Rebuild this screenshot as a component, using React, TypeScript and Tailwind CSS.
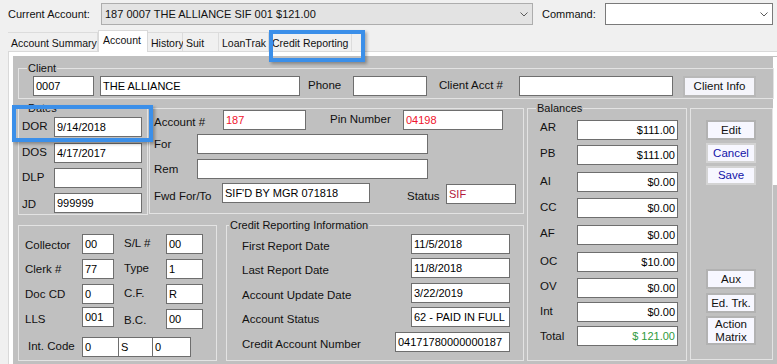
import React from 'react'

type FieldProps = {
  value?: string
  className?: string
  right?: boolean
  color?: string
}

function Field({ value = '', className = '', right = false, color = 'text-black' }: FieldProps) {
  return (
    <div
      className={`h-[20px] shrink-0 bg-white border border-[#6e6e6e] flex items-center px-[2px] text-[11px] leading-none whitespace-nowrap overflow-hidden ${
        right ? 'justify-end' : ''
      } ${color} ${className}`}
    >
      {value}
    </div>
  )
}

function Label({ children, className = '' }: { children: React.ReactNode; className?: string }) {
  return (
    <span className={`shrink-0 text-[11.5px] leading-none text-[#111] whitespace-nowrap ${className}`}>
      {children}
    </span>
  )
}

function Group({
  label,
  legendPos = 'left-[8px]',
  className = '',
  children,
}: {
  label?: string
  legendPos?: string
  className?: string
  children?: React.ReactNode
}) {
  return (
    <div className={`relative shrink-0 border border-[#e3e3e3] ${className}`}>
      {label && (
        <span
          className={`absolute -top-[7px] ${legendPos} bg-[#c0c0c0] px-[1px] text-[11px] leading-[13px] text-[#111] whitespace-nowrap`}
        >
          {label}
        </span>
      )}
      {children}
    </div>
  )
}

function WinBtn({
  children,
  className = '',
  light = false,
}: {
  children: React.ReactNode
  className?: string
  light?: boolean
}) {
  return (
    <div
      className={`w-[50px] shrink-0 flex items-center justify-center text-center bg-[#f7f7ff] border-2 text-[11.5px] leading-[13px] ${
        light ? 'border-[#d4d4d4] text-[#1212a8]' : 'border-[#b2b2b2] text-[#111]'
      } ${className}`}
    >
      {children}
    </div>
  )
}

function Chevron() {
  return (
    <svg width="8" height="5" viewBox="0 0 8 5" className="shrink-0">
      <path d="M0.5 0.5 L4 4 L7.5 0.5" fill="none" stroke="#5a5a5a" strokeWidth="1" />
    </svg>
  )
}

const balances = [
  { l: 'AR', v: '$111.00', mt: 'mt-[11px]', lc: '-translate-y-[2px]', vc: '' },
  { l: 'PB', v: '$111.00', mt: 'mt-[5px]', lc: '-translate-y-[1px]', vc: '' },
  { l: 'AI', v: '$0.00', mt: 'mt-[7px]', lc: '', vc: '' },
  { l: 'CC', v: '$0.00', mt: 'mt-[6px]', lc: '', vc: '' },
  { l: 'AF', v: '$0.00', mt: 'mt-[7px]', lc: '-translate-y-[1px]', vc: '' },
  { l: 'OC', v: '$10.00', mt: 'mt-[7px]', lc: 'text-[#1c1cff]', vc: '' },
  { l: 'OV', v: '$0.00', mt: 'mt-[6px]', lc: '-translate-y-[1px]', vc: '' },
  { l: 'Int', v: '$0.00', mt: 'mt-[4px]', lc: '', vc: '' },
  { l: 'Total', v: '$ 121.00', mt: 'mt-[4px]', lc: 'translate-y-[1px]', vc: 'text-[#2f9a3c]' },
]

const credit = [
  { l: 'First Report Date', v: '11/5/2018', mt: '' },
  { l: 'Last Report Date', v: '11/8/2018', mt: 'mt-[4px]' },
  { l: 'Account Update Date', v: '3/22/2019', mt: 'mt-[5px]' },
  { l: 'Account Status', v: '62 - PAID IN FULL', mt: 'mt-[4px]' },
]

const tabs = [
  { t: 'Account Summary', w: 'w-[90px]' },
  { t: 'Account', w: 'w-[50px]', active: true },
  { t: 'History', w: 'w-[35px]' },
  { t: 'Suit', w: 'w-[36px]' },
  { t: 'LoanTrak', w: 'w-[50px]' },
  { t: 'Credit Reporting', w: 'w-[83px]' },
]

export default function App() {
  return (
    <div className="relative w-[777px] h-[364px] overflow-hidden bg-[#f0f0f0] font-['Liberation_Sans',Arial,sans-serif] text-[#111]">
      {/* Barra superior */}
      <div className="flex items-center h-[22px] mt-[3px] pl-[8px]">
        <span className="w-[93px] text-[11px] whitespace-nowrap">Current Account:</span>
        <div className="w-[432px] h-[22px] bg-[#e3e3e3] border border-[#adadad] flex items-center pl-[3px] pr-[4px] text-[11px]">
          <span className="flex-1 whitespace-nowrap">187 0007 THE ALLIANCE SIF 001 $121.00</span>
          <Chevron />
        </div>
        <span className="ml-[9px] w-[63px] text-[11px]">Command:</span>
        <div className="w-[168px] h-[22px] bg-white border border-[#7a7a7a] flex items-center justify-end pr-[4px]">
          <Chevron />
        </div>
      </div>

      {/* Pestañas */}
      <div className="flex items-end h-[21px] mt-[5px] pl-[8px]">
        {tabs.map((tab) =>
          tab.active ? (
            <div
              key={tab.t}
              className={`${tab.w} relative z-10 h-[22px] -mb-[1px] bg-white border-l border-r border-t border-[#d9d9d9] pl-[4px] pt-[4px] text-[10.5px] leading-none whitespace-nowrap`}
            >
              {tab.t}
            </div>
          ) : (
            <div
              key={tab.t}
              className={`${tab.w} h-[19px] bg-[#f0f0f0] border-r border-t border-[#dcdcdc] pl-[3px] pt-[5px] text-[10.5px] leading-none whitespace-nowrap`}
            >
              {tab.t}
            </div>
          )
        )}
      </div>

      {/* Página */}
      <div className="ml-[8px] h-[313px] border-l border-t border-[#d9d9d9] bg-white pl-[4px] pt-[4px]">
        <div className="relative h-full bg-[#c0c0c0] pl-[5px] pt-[12px]">
          <div className="absolute right-0 top-[1px] w-[4px] h-[128px] bg-white" />

          {/* Client */}
          <Group label="Client" className="w-[756px] h-[31px] flex items-start pt-[7px]">
            <Field value="0007" className="ml-[14px] w-[61px]" />
            <Field value="THE ALLIANCE" className="ml-[6px] w-[200px]" />
            <Label className="ml-[8px] w-[45px] pt-[4px]">Phone</Label>
            <Field className="w-[74px]" />
            <Label className="ml-[12px] w-[80px] pt-[4px]">Client Acct #</Label>
            <Field className="w-[154px]" />
            <div className="ml-[10px] w-[73px] h-[21px] flex items-center justify-center bg-[#f5f5fb] border-2 border-[#b8b8b8] text-[11.5px]">
              Client Info
            </div>
          </Group>

          <div className="flex mt-[9px]">
            <div className="w-[506px] flex flex-col">
              <div className="flex gap-[1px]">
                {/* Dates */}
                <Group label="Dates" className="w-[130px] h-[107px] pl-[3px] pt-[8px] flex flex-col">
                  <div className="flex items-center">
                    <Label className="w-[32px]">DOR</Label>
                    <Field value="9/14/2018" className="w-[88px]" />
                  </div>
                  <div className="flex items-center mt-[6px]">
                    <Label className="w-[32px]">DOS</Label>
                    <Field value="4/17/2017" className="w-[88px]" />
                  </div>
                  <div className="flex items-center mt-[5px]">
                    <Label className="w-[32px]">DLP</Label>
                    <Field className="w-[88px]" />
                  </div>
                  <div className="flex items-center mt-[5px]">
                    <Label className="w-[32px] pt-[3px]">JD</Label>
                    <Field value="999999" className="w-[88px]" />
                  </div>
                </Group>

                {/* Account */}
                <Group className="w-[375px] h-[106px] pl-[4px] pt-[1px] flex flex-col">
                  <div className="flex items-center">
                    <Label className="w-[69px] pt-[5px]">Account #</Label>
                    <Field value="187" className="w-[83px]" color="text-[#f0142e]" />
                    <Label className="ml-[24px] w-[73px]">Pin Number</Label>
                    <Field value="04198" className="w-[100px]" color="text-[#f0142e]" />
                  </div>
                  <div className="flex items-center mt-[4px]">
                    <Label className="w-[43px] pt-[2px]">For</Label>
                    <Field className="w-[231px]" />
                  </div>
                  <div className="flex items-center mt-[5px]">
                    <Label className="w-[43px] pt-[1px]">Rem</Label>
                    <Field className="w-[231px]" />
                  </div>
                  <div className="flex items-start mt-[4px]">
                    <Label className="w-[68px] pt-[8px]">Fwd For/To</Label>
                    <Field value="SIF'D BY MGR 071818" className="w-[148px]" />
                    <Label className="ml-[37px] w-[39px] pt-[8px]">Status</Label>
                    <Field value="SIF" className="w-[70px] mt-[1px]" color="text-[#b2183a]" />
                  </div>
                </Group>
              </div>

              <div className="flex gap-[9px] mt-[10px]">
                {/* Collector etc */}
                <Group className="w-[199px] h-[136px] pl-[6px] pt-[8px] flex flex-col">
                  <div className="flex items-center">
                    <Label className="w-[57px] pt-[3px]">Collector</Label>
                    <Field value="00" className="w-[32px]" />
                    <Label className="ml-[10px] w-[42px]">S/L #</Label>
                    <Field value="00" className="w-[37px]" />
                  </div>
                  <div className="flex items-center mt-[5px]">
                    <Label className="w-[57px] pt-[2px]">Clerk #</Label>
                    <Field value="77" className="w-[32px]" />
                    <Label className="ml-[10px] w-[42px]">Type</Label>
                    <Field value="1" className="w-[37px]" />
                  </div>
                  <div className="flex items-center mt-[5px]">
                    <Label className="w-[57px] pt-[2px]">Doc CD</Label>
                    <Field value="0" className="w-[32px]" />
                    <Label className="ml-[10px] w-[42px]">C.F.</Label>
                    <Field value="R" className="w-[37px]" />
                  </div>
                  <div className="flex items-start mt-[3px]">
                    <Label className="w-[57px] pt-[7px]">LLS</Label>
                    <Field value="001" className="w-[32px]" />
                    <Label className="ml-[10px] w-[42px] pt-[8px]">B.C.</Label>
                    <Field value="00" className="w-[37px] mt-[2px]" />
                  </div>
                  <div className="flex items-center mt-[8px] pl-[3px]">
                    <Label className="w-[54px]">Int. Code</Label>
                    <Field value="0" className="w-[37px]" />
                    <Field value="S" className="w-[34px] border-l-0" />
                    <Field value="0" className="w-[38px] border-l-0" />
                  </div>
                </Group>

                {/* Credit Reporting Information */}
                <Group
                  label="Credit Reporting Information"
                  legendPos="left-[2px]"
                  className="w-[298px] h-[136px] pl-[15px] pt-[8px] flex flex-col"
                >
                  {credit.map((c) => (
                    <div key={c.l} className={`flex items-center ${c.mt}`}>
                      <Label className="w-[169px] translate-y-[3px]">{c.l}</Label>
                      <Field value={c.v} className="w-[99px]" />
                    </div>
                  ))}
                  <div className="flex items-center mt-[5px]">
                    <Label className="w-[153px] translate-y-[3px]">Credit Account Number</Label>
                    <Field value="04171780000000187" className="w-[115px]" />
                  </div>
                </Group>
              </div>
            </div>

            {/* Balances */}
            <Group label="Balances" className="ml-[3px] w-[160px] h-[253px] pl-[12px] flex flex-col">
              {balances.map((b) => (
                <div key={b.l} className={`flex items-center ${b.mt}`}>
                  <Label className={`w-[37px] ${b.lc}`}>{b.l}</Label>
                  <Field value={b.v} right className="w-[101px]" color={b.vc || 'text-black'} />
                </div>
              ))}
            </Group>

            {/* Botones */}
            <Group className="ml-[3px] w-[83px] h-[252px] pl-[15px] pt-[11px] flex flex-col">
              <WinBtn className="h-[20px]">Edit</WinBtn>
              <WinBtn light className="h-[20px] mt-[3px]">Cancel</WinBtn>
              <WinBtn light className="h-[19px] mt-[3px]">Save</WinBtn>
              <WinBtn className="h-[20px] mt-[84px]">Aux</WinBtn>
              <WinBtn className="h-[20px] mt-[4px]">Ed. Trk.</WinBtn>
              <WinBtn className="h-[29px] mt-[3px]">
                Action
                <br />
                Matrix
              </WinBtn>
            </Group>
          </div>
        </div>
      </div>

      {/* Resaltados */}
      <div className="absolute left-[269px] top-[30px] w-[96px] h-[32px] border-[4px] border-[#3b8fe9] shadow-[2px_2px_3px_rgba(0,0,0,0.3)]" />
      <div className="absolute left-[12px] top-[105px] w-[141px] h-[37px] border-[4px] border-[#3b8fe9] shadow-[2px_2px_3px_rgba(0,0,0,0.3)]" />
    </div>
  )
}
